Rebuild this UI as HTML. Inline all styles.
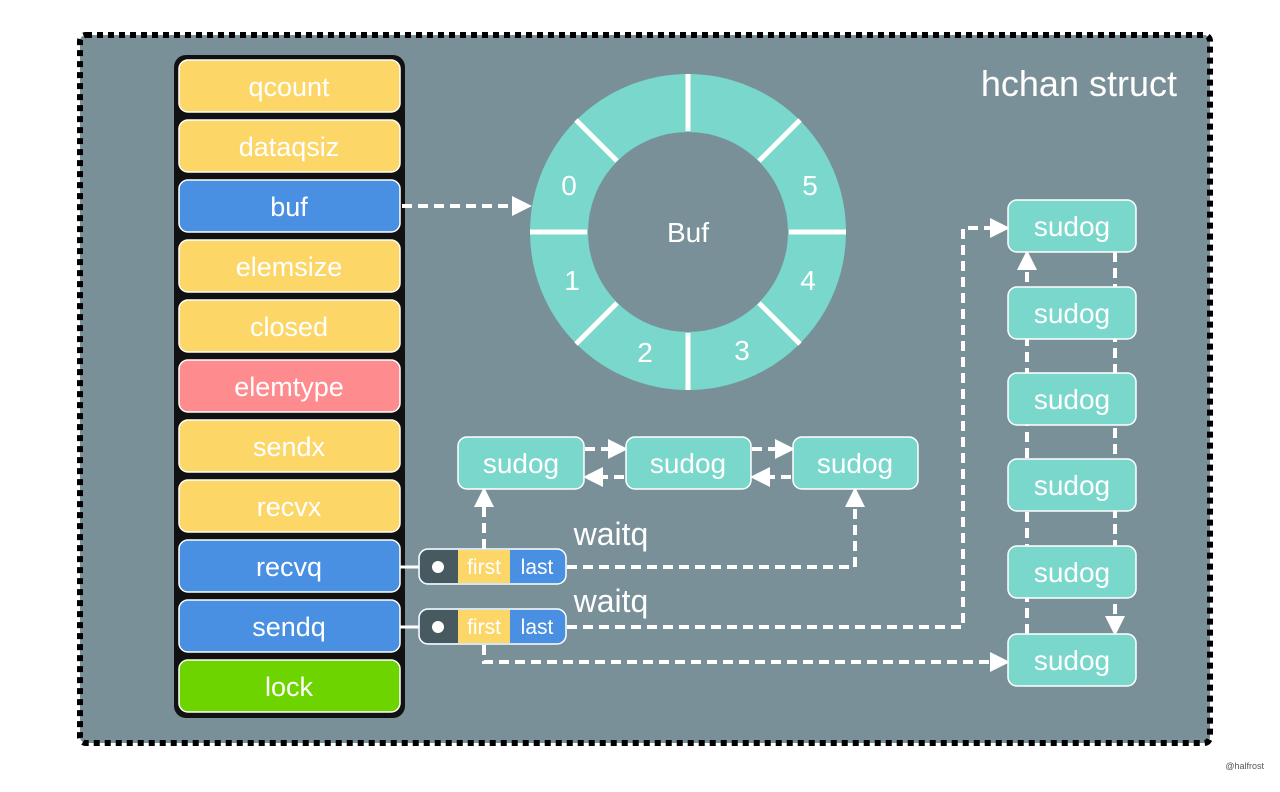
<!DOCTYPE html>
<html><head><meta charset="utf-8"><style>
body{margin:0;background:#fff;width:1280px;height:787px;overflow:hidden}
text{font-family:"Liberation Sans",sans-serif;fill:#fff}
</style></head><body>
<svg width="1280" height="787" viewBox="0 0 1280 787">
<defs>
<marker id="a" viewBox="0 0 10 10" refX="8" refY="5" markerWidth="5" markerHeight="5" orient="auto"><path d="M0,0L10,5L0,10z" fill="#fff"/></marker>
</defs>
<rect x="80" y="35" width="1130" height="708" rx="6" fill="#7a9098" stroke="#000" stroke-width="6" stroke-dasharray="6,5"/>
<text x="1177" y="96" font-size="36" text-anchor="end">hchan struct</text>
<text x="1264" y="769" font-size="9" text-anchor="end" style="fill:#555">@halfrost</text>
<rect x="174" y="55" width="231" height="663" rx="12" fill="#111"/>
<g font-size="26" text-anchor="middle" stroke="#fff" stroke-width="1.5">
<rect x="179" y="60" width="221" height="52" rx="9" fill="#fcd667"/>
<rect x="179" y="120" width="221" height="52" rx="9" fill="#fcd667"/>
<rect x="179" y="180" width="221" height="52" rx="9" fill="#4a90e2"/>
<rect x="179" y="240" width="221" height="52" rx="9" fill="#fcd667"/>
<rect x="179" y="300" width="221" height="52" rx="9" fill="#fcd667"/>
<rect x="179" y="360" width="221" height="52" rx="9" fill="#fe8b8e"/>
<rect x="179" y="420" width="221" height="52" rx="9" fill="#fcd667"/>
<rect x="179" y="480" width="221" height="52" rx="9" fill="#fcd667"/>
<rect x="179" y="540" width="221" height="52" rx="9" fill="#4a90e2"/>
<rect x="179" y="600" width="221" height="52" rx="9" fill="#4a90e2"/>
<rect x="179" y="660" width="221" height="52" rx="9" fill="#6dd400"/>
</g>
<g font-size="27" text-anchor="middle">
<text x="289" y="96">qcount</text><text x="289" y="156">dataqsiz</text><text x="289" y="216">buf</text>
<text x="289" y="276">elemsize</text><text x="289" y="336">closed</text><text x="289" y="396">elemtype</text>
<text x="289" y="456">sendx</text><text x="289" y="516">recvx</text><text x="289" y="576">recvq</text>
<text x="289" y="636">sendq</text><text x="289" y="696">lock</text>
</g>
<circle cx="688" cy="232" r="129" fill="none" stroke="#79d7cc" stroke-width="58"/>
<g stroke="#fff" stroke-width="5">
<line x1="688" y1="74" x2="688" y2="131"/><line x1="688" y1="333" x2="688" y2="390"/>
<line x1="530" y1="232" x2="587" y2="232"/><line x1="789" y1="232" x2="846" y2="232"/>
<line x1="576" y1="120" x2="617" y2="161"/><line x1="759" y1="303" x2="800" y2="344"/>
<line x1="800" y1="120" x2="759" y2="161"/><line x1="617" y1="303" x2="576" y2="344"/>
</g>
<g font-size="28" text-anchor="middle">
<text x="569" y="195">0</text><text x="810" y="195">5</text><text x="572" y="290">1</text>
<text x="808" y="290">4</text><text x="645" y="362">2</text><text x="742" y="360">3</text>
<text x="688" y="242">Buf</text>
</g>
<g fill="none" stroke="#fff" stroke-width="4" stroke-dasharray="10,6">
<path d="M402,206H528" marker-end="url(#a)"/>
<path d="M585,449H624" marker-end="url(#a)"/><path d="M752,449H791" marker-end="url(#a)"/>
<path d="M624,477H587" marker-end="url(#a)"/><path d="M791,477H754" marker-end="url(#a)"/>
<path d="M484,549V491" marker-end="url(#a)"/>
<path d="M567,567H855V491" marker-end="url(#a)"/>
<path d="M567,627H963V228H1006" marker-end="url(#a)"/>
<path d="M484,645V662H1006" marker-end="url(#a)"/>
<path d="M1027,634V254" marker-end="url(#a)"/>
<path d="M1115,252V632" marker-end="url(#a)"/>
</g>
<g stroke="#fff" stroke-width="1.5" fill="#79d7cc">
<rect x="458" y="437" width="126" height="52" rx="9"/><rect x="626" y="437" width="125" height="52" rx="9"/><rect x="793" y="437" width="125" height="52" rx="9"/>
<rect x="1008" y="200" width="128" height="52" rx="9"/><rect x="1008" y="287" width="128" height="52" rx="9"/>
<rect x="1008" y="373" width="128" height="52" rx="9"/><rect x="1008" y="459" width="128" height="52" rx="9"/>
<rect x="1008" y="546" width="128" height="52" rx="9"/><rect x="1008" y="634" width="128" height="52" rx="9"/>
</g>
<g font-size="28" text-anchor="middle">
<text x="521" y="473">sudog</text><text x="688" y="473">sudog</text><text x="855" y="473">sudog</text>
<text x="1072" y="236">sudog</text><text x="1072" y="323">sudog</text><text x="1072" y="409">sudog</text>
<text x="1072" y="495">sudog</text><text x="1072" y="582">sudog</text><text x="1072" y="670">sudog</text>
<text x="611" y="545" font-size="32">waitq</text><text x="611" y="612" font-size="32">waitq</text>
</g>
<g>
<line x1="400" y1="567" x2="438" y2="567" stroke="#fff" stroke-width="3"/>
<line x1="400" y1="627" x2="438" y2="627" stroke="#fff" stroke-width="3"/>
<rect x="419" y="549" width="147" height="35" rx="9" fill="#4a90e2" stroke="#fff" stroke-width="1.5"/>
<path d="M428,550H458V583H428A8,8 0 0 1 420,575V558A8,8 0 0 1 428,550z" fill="#475a60"/>
<rect x="458" y="550" width="52" height="33" fill="#fcd667"/>
<circle cx="438" cy="567" r="6" fill="#fff"/>
<rect x="419" y="609" width="147" height="35" rx="9" fill="#4a90e2" stroke="#fff" stroke-width="1.5"/>
<path d="M428,610H458V643H428A8,8 0 0 1 420,635V618A8,8 0 0 1 428,610z" fill="#475a60"/>
<rect x="458" y="610" width="52" height="33" fill="#fcd667"/>
<circle cx="438" cy="627" r="6" fill="#fff"/>
<g font-size="21" text-anchor="middle">
<text x="484" y="574">first</text><text x="537" y="574">last</text>
<text x="484" y="634">first</text><text x="537" y="634">last</text>
</g>
</g>
</svg>
</body></html>
